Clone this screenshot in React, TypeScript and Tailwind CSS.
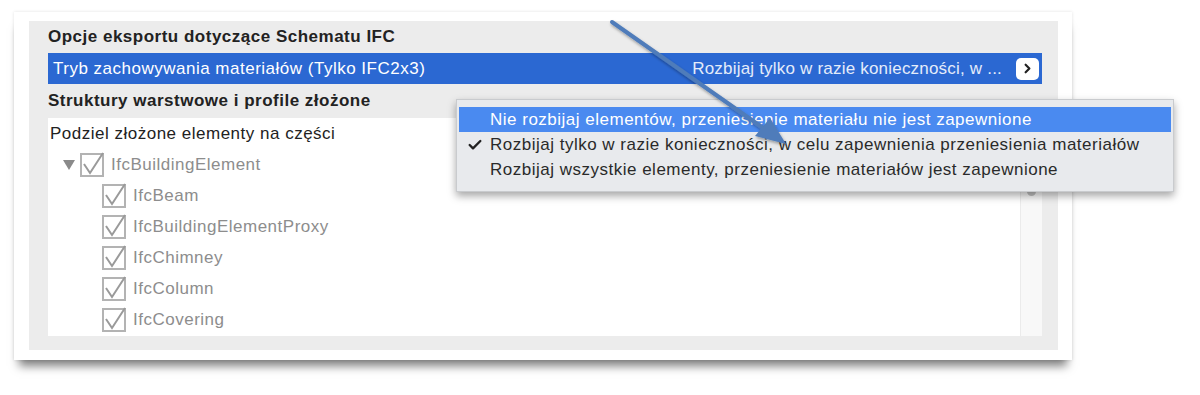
import { Check, ChevronRight } from 'lucide-react';

const children = ['IfcBeam', 'IfcBuildingElementProxy', 'IfcChimney', 'IfcColumn', 'IfcCovering'];

const options = [
  { label: 'Nie rozbijaj elementów, przeniesienie materiału nie jest zapewnione', active: true, checked: false },
  { label: 'Rozbijaj tylko w razie konieczności, w celu zapewnienia przeniesienia materiałów', active: false, checked: true },
  { label: 'Rozbijaj wszystkie elementy, przeniesienie materiałów jest zapewnione', active: false, checked: false },
];

const Box = () => (
  <span className="relative w-[24px] h-[24px] border-2 border-[#b3b3b3] bg-white shrink-0">
    <svg className="absolute -left-[1px] -top-[4px]" width="24" height="26" viewBox="0 0 24 26">
      <path d="M3 13 L9 22 L22 2" fill="none" stroke="#9a9a9a" strokeWidth="2" />
    </svg>
  </span>
);

export default function App() {
  return (
    <div className="relative w-[1200px] h-[395px] bg-white overflow-hidden font-['Liberation_Sans',Arial,sans-serif] text-[17px] tracking-[0.5px]">
      <div className="ml-[14px] mt-[12px] w-[1058px] h-[348px] bg-white pt-[9px] pl-[15px] shadow-[0_11px_9px_-5px_rgba(0,0,0,0.5),0_0_3px_rgba(0,0,0,0.12)]">
        <div className="w-[1029px] h-[329px] bg-[#ececec] pl-[19px] pr-[16px] flex flex-col">
          <div className="h-[32px] flex items-center font-bold text-[#222]">
            Opcje eksportu dotyczące Schematu IFC
          </div>
          <div className="h-[31px] bg-[#2b68d2] flex items-center pl-[5px] pr-[3px] text-white">
            <span className="flex-1">Tryb zachowywania materiałów (Tylko IFC2x3)</span>
            <span className="mr-[14px] text-[#e4ecfa] tracking-[0.2px]">Rozbijaj tylko w razie konieczności, w ...</span>
            <span className="w-[23px] h-[22px] bg-white rounded-[5px] flex items-center justify-center">
              <ChevronRight size={15} strokeWidth={3.5} color="#222" />
            </span>
          </div>
          <div className="h-[34px] flex items-center font-bold text-[#222]">
            Struktury warstwowe i profile złożone
          </div>
          <div className="h-[218px] bg-white flex">
            <div className="flex-1 pl-[2px] pt-[4px]">
              <div className="h-[24px] flex items-center text-[#222]">Podziel złożone elementy na części</div>
              <div className="h-[31px] flex items-center mt-[3px] pl-[13px]">
                <span className="w-0 h-0 border-l-[6px] border-r-[6px] border-t-[10px] border-l-transparent border-r-transparent border-t-[#8a8a8a] mr-[5px]" />
                <Box />
                <span className="ml-[7px] text-[#8d8d8d]">IfcBuildingElement</span>
              </div>
              {children.map((c) => (
                <div key={c} className="h-[31px] flex items-center pl-[52px]">
                  <Box />
                  <span className="ml-[7px] text-[#8d8d8d]">{c}</span>
                </div>
              ))}
            </div>
            <div className="w-[22px] bg-[#f8f8f8] border-l border-[#ebebeb] flex justify-center">
              <div className="w-[9px] h-[78px] rounded-full bg-[#c2c2c2]" />
            </div>
          </div>
        </div>
      </div>

      <div className="absolute left-[456px] top-[99px] w-[718px] h-[93px] bg-[#e8eaed] border border-[#c9cbce] shadow-[0_4px_8px_rgba(0,0,0,0.35)] pt-[7px] px-[2px]">
        {options.map((o) => (
          <div
            key={o.label}
            className={`h-[25px] flex items-center ${o.active ? 'bg-[#4a8af0] text-white' : 'text-[#2a2a2a]'}`}
          >
            <span className="w-[31px] flex justify-center">
              {o.checked && <Check size={16} strokeWidth={3.5} color="#222" />}
            </span>
            <span>{o.label}</span>
          </div>
        ))}
      </div>

      <svg className="absolute inset-0 pointer-events-none" width="1200" height="395">
        <defs>
          <filter id="sh" x="-20%" y="-20%" width="140%" height="140%">
            <feDropShadow dx="1" dy="2" stdDeviation="1.5" floodColor="#000" floodOpacity="0.35" />
          </filter>
        </defs>
        <g filter="url(#sh)">
          <line x1="612" y1="22" x2="766" y2="130" stroke="#4f7cba" strokeWidth="4" strokeLinecap="round" />
          <polygon points="786,144 755,136 770,118" fill="#4f7cba" />
        </g>
      </svg>
    </div>
  );
}
